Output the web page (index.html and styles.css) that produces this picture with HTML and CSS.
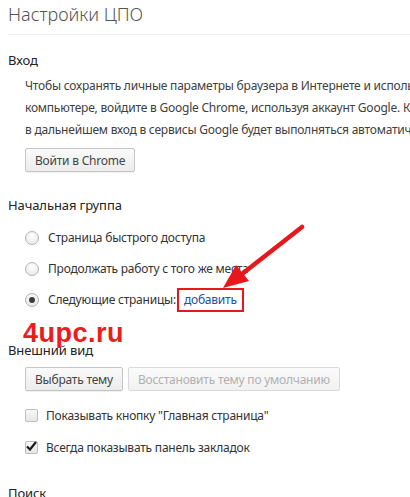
FILE: index.html
```html
<!DOCTYPE html>
<html lang="ru">
<head>
    <meta charset="UTF-8">
    <title>Настройки ЦПО</title>
    <link rel="stylesheet" href="styles.css">
</head>

<body>
    <!-- заголовок страницы -->
    <header class="page-head">
        <h1>Настройки ЦПО</h1>
    </header>

    <!-- Вход -->
    <section class="section">
        <h3>Вход</h3>
        <div class="section-body">
            <p class="intro">
                <span>Чтобы сохранять личные параметры браузера в Интернете и использовать их на любом</span>
                <span>компьютере, войдите в Google Chrome, используя аккаунт Google. Кроме того,</span>
                <span>в дальнейшем вход в сервисы Google будет выполняться автоматически.</span>
            </p>
            <button class="btn btn-signin" type="button">Войти в Chrome</button>
        </div>
    </section>

    <!-- Начальная группа -->
    <section class="section section-start">
        <h3>Начальная группа</h3>
        <div class="section-body">
            <label class="radio-row"><span class="radio"></span>Страница быстрого доступа</label>
            <label class="radio-row"><span class="radio"></span>Продолжать работу с того же места</label>
            <label class="radio-row"><span class="radio checked"></span>Следующие страницы:<a class="add-link" href="#">добавить</a></label>
        </div>
    </section>

    <!-- Внешний вид -->
    <section class="section section-look">
        <h3>Внешний вид</h3>
        <div class="section-body">
            <div class="btn-row">
                <button class="btn" type="button">Выбрать тему</button>
                <button class="btn" type="button" disabled>Восстановить тему по умолчанию</button>
            </div>
            <label class="check-row"><span class="check"></span>Показывать кнопку "Главная страница"</label>
            <label class="check-row"><span class="check checked">
                <svg width="11" height="10" viewBox="0 0 11 10"><path d="M1 5.5 L4 8.5 L10 1" fill="none" stroke="#1b1b1b" stroke-width="2.2"/></svg>
            </span>Всегда показывать панель закладок</label>
        </div>
    </section>

    <!-- Поиск -->
    <section class="section section-search">
        <h3>Поиск</h3>
    </section>

    <!-- пометки поверх скриншота -->
    <div class="watermark">4upc.ru</div>
    <svg class="arrow" width="100" height="80" viewBox="0 0 100 80">
        <line x1="90" y1="3" x2="30" y2="50" stroke="#e8171b" stroke-width="4.5" stroke-linecap="round"/>
        <polygon points="11,64 24,41 37,57" fill="#e8171b"/>
    </svg>
</body>

</html>
```

FILE: styles.css
```css
/* базовые стили */
html, body {
    margin: 0;
    padding: 0;
    background: #fff;
    overflow: hidden;
}

body {
    position: relative;
    width: 410px;
    height: 497px;
    font-family: "Noto Sans", "Open Sans", sans-serif;
    font-size: 12px;
    letter-spacing: -0.22px;
    color: #303030;
}

/* заголовок */
.page-head {
    margin-left: 8px;
    padding-bottom: 6px;
    border-bottom: 1px solid #eeeeee;
}

.page-head h1 {
    margin: 0;
    font-size: 18px;
    font-weight: 300;
    line-height: 28px;
    letter-spacing: 0;
    color: #555;
}

/* разделы */
.section h3 {
    margin: 15px 0 0 8px;
    font-size: 13px;
    font-weight: normal;
    line-height: 20px;
    letter-spacing: -0.1px;
    color: #222;
}

.section-body {
    padding-left: 25px;
}

.intro {
    margin: 5px 0 7px 0;
    line-height: 22px;
    color: #404040;
}

.intro span {
    display: block;
    white-space: nowrap;
}

/* кнопки */
.btn {
    height: 24px;
    padding: 0 9px;
    font-family: inherit;
    font-size: 12px;
    letter-spacing: -0.22px;
    color: #444;
    background: linear-gradient(#fafafa, #ececec);
    border: 1px solid #c4c4c4;
    border-radius: 2px;
    box-shadow: 0 1px 0 rgba(0, 0, 0, 0.06);
}

.btn:disabled {
    color: #b0b0b0;
    border-color: #dadada;
    background: linear-gradient(#fbfbfb, #f1f1f1);
    box-shadow: none;
}

.btn-row {
    display: flex;
    gap: 5px;
    margin-top: 7px;
}

/* начальная группа */
.section-start h3 {
    margin-top: 23px;
}

.section-start .section-body {
    padding-top: 7px;
}

.radio-row, .check-row {
    display: flex;
    align-items: center;
    white-space: nowrap;
    color: #333;
}

.radio-row {
    height: 31px;
}

.radio {
    box-sizing: border-box;
    width: 14px;
    height: 14px;
    margin-right: 9px;
    border: 1px solid #b3b3b3;
    border-radius: 50%;
    background: radial-gradient(circle at 50% 35%, #ffffff, #e4e4e4);
    position: relative;
}

.radio.checked::after {
    content: "";
    position: absolute;
    left: 3px;
    top: 3px;
    width: 6px;
    height: 6px;
    border-radius: 50%;
    background: #3c3c3c;
}

.add-link {
    margin-left: 1px;
    padding: 2px 5px;
    color: #2450a8;
    text-decoration: none;
    border: 2px solid #e8171b;
    line-height: 16px;
}

/* внешний вид */
.section-look h3 {
    margin-top: 25px;
}

.check-row {
    height: 32px;
}

.check-row:first-of-type {
    margin-top: 8px;
}

.check {
    box-sizing: border-box;
    width: 13px;
    height: 13px;
    margin-right: 8px;
    border: 1px solid #bcbcbc;
    border-radius: 2px;
    background: linear-gradient(#f8f8f8, #e6e6e6);
    display: flex;
    align-items: center;
    justify-content: center;
}

.check svg {
    margin-top: -2px;
}

.section-search h3 {
    margin-top: 20px;
}

/* пометки */
.watermark {
    position: absolute;
    left: 23px;
    top: 318px;
    font-family: "Liberation Sans", Arial, sans-serif;
    font-size: 27px;
    font-weight: bold;
    color: #ec1c1c;
    letter-spacing: 0.5px;
}

.arrow {
    position: absolute;
    left: 212px;
    top: 224px;
}
```
